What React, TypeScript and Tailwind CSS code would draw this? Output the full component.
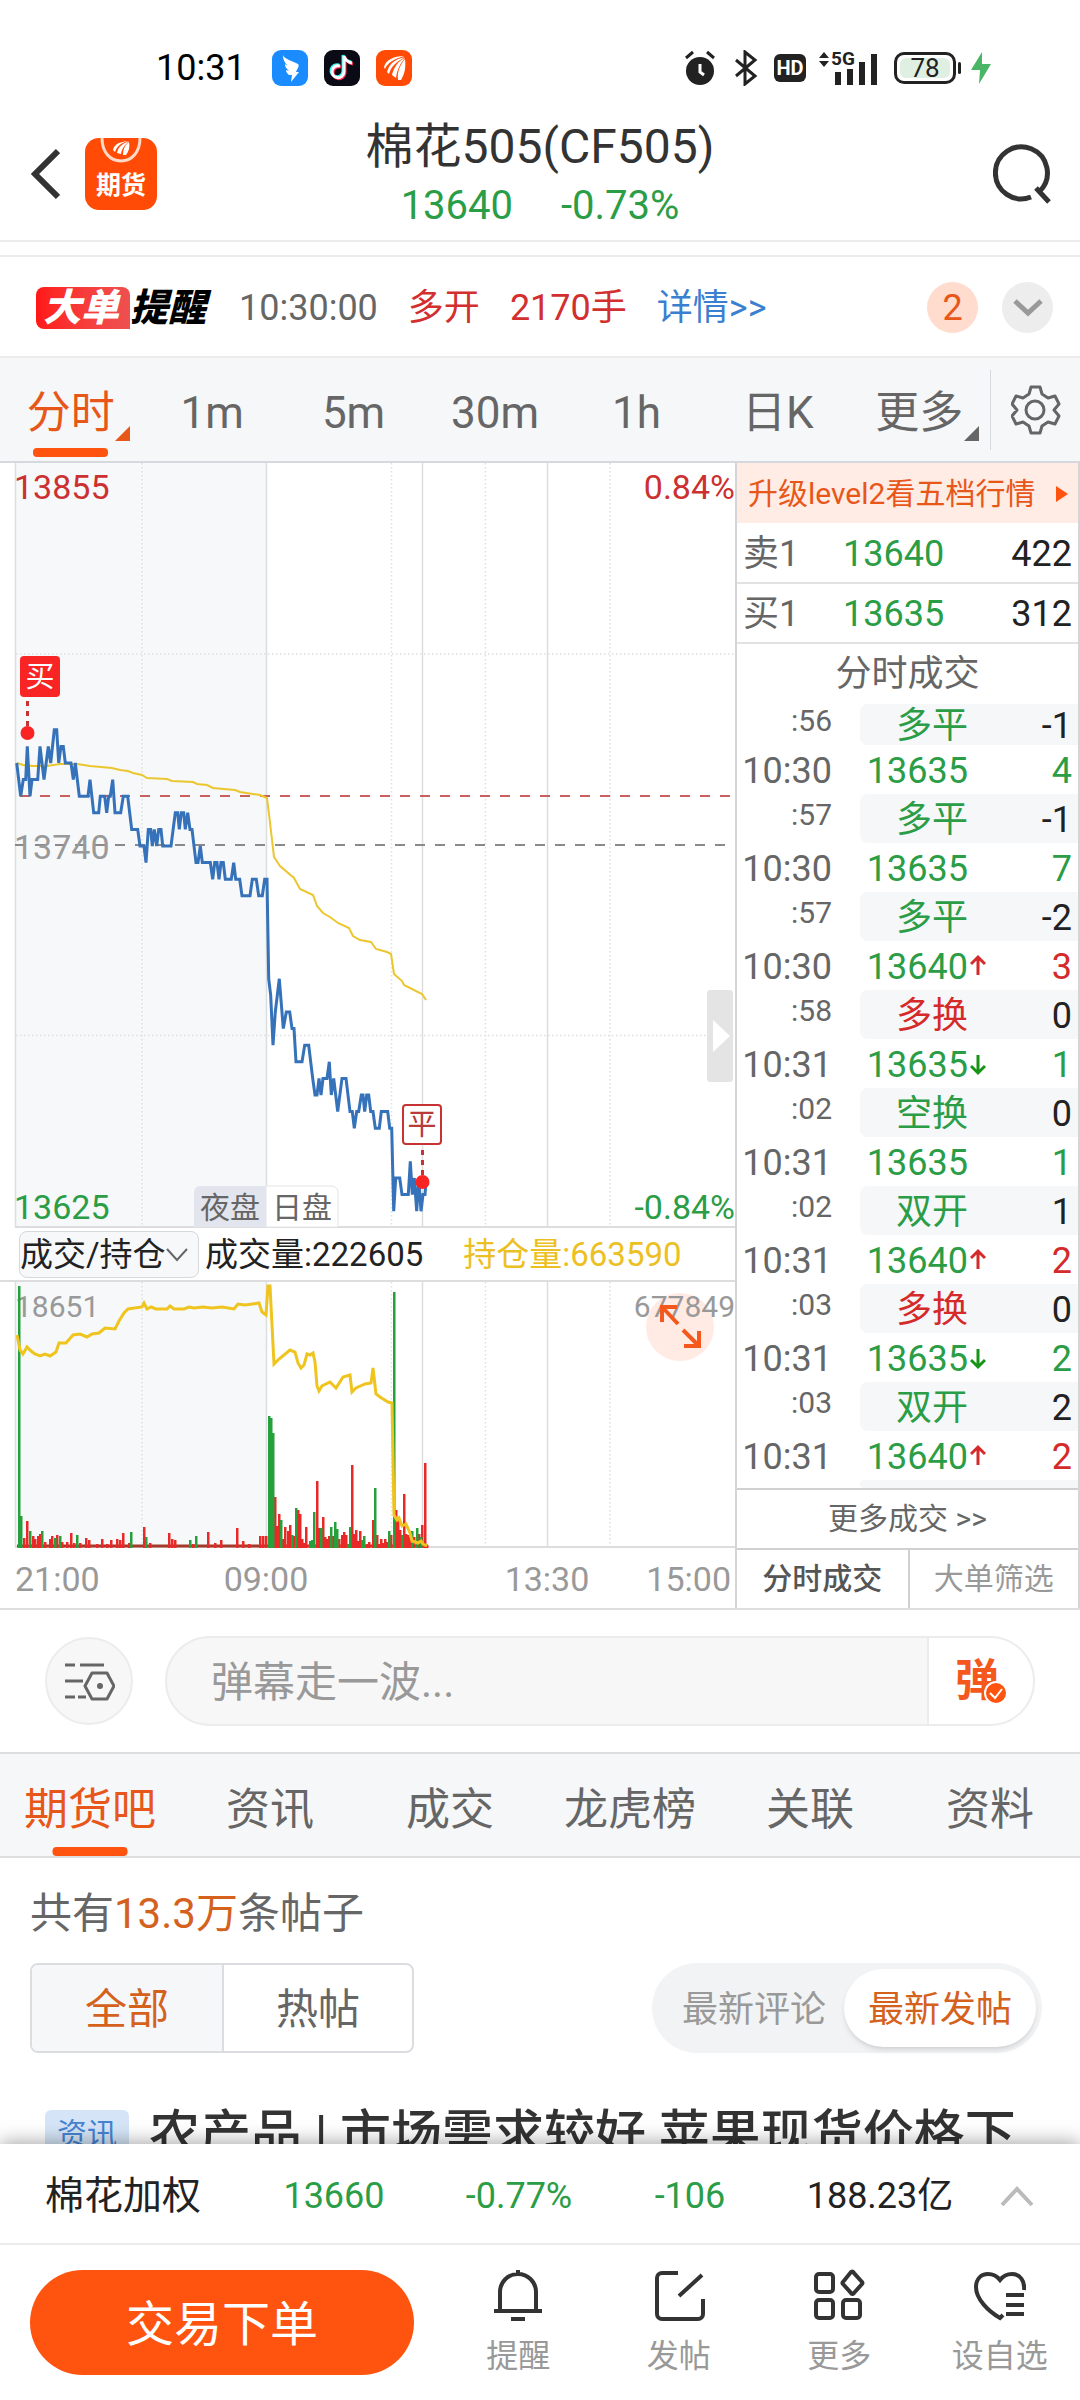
import React, { useState } from "react";
import clsx from "clsx";

type Side = "up" | "down";

interface Trade {
  time: string;
  label: string;
  qty: string;
  tone: Side;
  arrow?: Side;
  sub?: boolean;
}

const periods = ["分时", "1m", "5m", "30m", "1h", "日K", "更多"];
const sections = ["期货吧", "资讯", "成交", "龙虎榜", "关联", "资料"];

const trades: Trade[] = [
  { time: ":56", label: "多平", qty: "-1", tone: "down", sub: true },
  { time: "10:30", label: "13635", qty: "4", tone: "down" },
  { time: ":57", label: "多平", qty: "-1", tone: "down", sub: true },
  { time: "10:30", label: "13635", qty: "7", tone: "down" },
  { time: ":57", label: "多平", qty: "-2", tone: "down", sub: true },
  { time: "10:30", label: "13640", qty: "3", tone: "down", arrow: "up" },
  { time: ":58", label: "多换", qty: "0", tone: "up", sub: true },
  { time: "10:31", label: "13635", qty: "1", tone: "down", arrow: "down" },
  { time: ":02", label: "空换", qty: "0", tone: "down", sub: true },
  { time: "10:31", label: "13635", qty: "1", tone: "down" },
  { time: ":02", label: "双开", qty: "1", tone: "down", sub: true },
  { time: "10:31", label: "13640", qty: "2", tone: "down", arrow: "up" },
  { time: ":03", label: "多换", qty: "0", tone: "up", sub: true },
  { time: "10:31", label: "13635", qty: "2", tone: "down", arrow: "down" },
  { time: ":03", label: "双开", qty: "2", tone: "down", sub: true },
  { time: "10:31", label: "13640", qty: "2", tone: "down", arrow: "up" },
  { time: "", label: "", qty: "", tone: "down", sub: true },
];

// [x in thirds of a unit, price ticks below 13765]
const priceTicks: [number, number][] = [
  [50, 0], [62, 2], [70, 1], [77, 1], [82, -1], [90, 2], [96, 1], [113, 1], [120, -1], [132, 1],
  [145, -1], [152, 0], [163, -2], [170, -2], [176, 0], [183, -1], [190, -1], [196, 0], [213, 0],
  [220, 1], [226, 0], [238, 2], [264, 2], [270, 1], [281, 3], [296, 3], [301, 2], [314, 2],
  [320, 3], [326, 2], [331, 2], [338, 1], [345, 3], [362, 3], [370, 2], [383, 2], [395, 4],
  [413, 4], [420, 5], [432, 5], [438, 6], [445, 4], [452, 4], [457, 5], [463, 4], [470, 5],
  [476, 4], [483, 4], [488, 5], [513, 5], [526, 3], [533, 3], [538, 4], [544, 3], [551, 3],
  [556, 4], [563, 3], [570, 4], [576, 4], [588, 6], [594, 6], [601, 5], [607, 6], [631, 6],
  [638, 7], [644, 6], [651, 6], [657, 7], [663, 6], [670, 6], [676, 7], [694, 7], [701, 6],
  [707, 7], [719, 7], [726, 8], [750, 8], [757, 7], [769, 7], [776, 8], [787, 8], [794, 7],
  [801, 7], [806, 13], [812, 14], [819, 17], [826, 15], [838, 13], [850, 16], [859, 15],
  [869, 15], [876, 16], [882, 16], [888, 18], [906, 18], [914, 17], [926, 17], [938, 19],
  [945, 20], [951, 20], [957, 19], [963, 20], [969, 19], [981, 19], [988, 18], [994, 20],
  [1001, 19], [1013, 21], [1026, 19], [1038, 19], [1050, 21], [1057, 21], [1063, 22], [1070, 21],
  [1076, 21], [1084, 20], [1089, 20], [1094, 21], [1100, 20], [1106, 20], [1112, 21], [1119, 21],
  [1126, 22], [1138, 22], [1144, 21], [1163, 21], [1169, 22], [1175, 22], [1181, 27], [1187, 25],
  [1199, 25], [1206, 26], [1225, 26], [1231, 24], [1237, 26], [1243, 25], [1250, 27], [1256, 25],
  [1263, 27], [1269, 26], [1275, 26], [1279, 25],
];

const pricePoints = priceTicks
  .map(([x, tick]) => `${(x / 3).toFixed(1)},${(763 + tick * 16.6).toFixed(1)}`)
  .join(" ");

const averagePoints =
  "17,763 23,765 33,766 47,766 60,764 77,764 90,766 112,768 120,770 128,771 133,773 142,775 147,778 167,779 172,781 193,782 197,784 207,785 213,788 235,790 240,792 260,795 267,798 269,814 274,857 280,866 294,878 300,889 313,895 317,906 323,913 330,917 338,923 349,928 353,936 360,940 371,942 376,949 387,952 391,954 394,974 402,981 404,985 422,994 426,1000";

const interestPoints =
  "17,1335 20,1350 23,1354 27,1347 31,1351 35,1354 40,1356 45,1354 50,1356 56,1352 59,1343 66,1343 73,1335 80,1334 87,1337 92,1334 99,1333 105,1328 115,1329 119,1321 124,1313 128,1309 142,1307 144,1303 147,1309 151,1307 156,1309 167,1309 170,1306 174,1309 184,1309 189,1307 194,1308 203,1307 212,1308 222,1307 234,1309 238,1304 245,1305 259,1303 262,1312 266,1315 268,1286 270,1286 274,1364 279,1359 290,1350 295,1352 298,1363 301,1368 304,1365 307,1354 310,1355 313,1353 315,1362 317,1386 319,1391 322,1386 330,1382 336,1388 343,1377 350,1375 352,1392 356,1388 365,1384 371,1383 373,1368 376,1394 380,1397 388,1402 392,1403 394,1515 397,1520 399,1518 402,1526 406,1524 410,1533 412,1541 418,1543 421,1541 423,1544 427,1546";

// [x, height]
const upBars: [number, number][] = [
  [24, 10], [27, 27], [33, 12], [35, 9], [38, 12], [40, 14], [45, 6], [50, 9], [52, 12], [57, 13],
  [62, 6], [67, 6], [71, 15], [74, 5], [80, 5], [86, 10], [89, 8], [97, 4], [102, 9], [107, 4],
  [111, 8], [117, 9], [120, 8], [123, 15], [129, 5], [144, 21], [150, 5], [169, 15], [172, 9],
  [175, 8], [193, 4], [208, 16], [215, 5], [221, 8], [237, 20], [243, 7], [249, 4], [260, 12],
  [263, 12], [266, 12], [275, 51], [277, 22], [279, 34], [283, 9], [285, 21], [288, 17],
  [290, 23], [294, 12], [298, 38], [300, 34], [302, 9], [304, 5], [306, 21], [317, 67],
  [319, 20], [323, 31], [325, 11], [327, 9], [329, 12], [333, 12], [339, 9], [342, 13],
  [344, 16], [346, 13], [352, 83], [354, 14], [356, 18], [358, 7], [360, 17], [367, 4],
  [369, 6], [373, 28], [377, 13], [379, 4], [381, 9], [383, 5], [385, 9], [387, 6], [391, 13],
  [396, 38], [398, 28], [400, 18], [404, 54], [406, 14], [408, 13], [410, 11], [414, 11],
  [419, 14], [422, 23], [425, 85], [427, 3],
];
const downBars: [number, number][] = [
  [19, 262], [21, 32], [30, 17], [42, 17], [55, 10], [60, 12], [77, 13], [131, 16], [146, 11],
  [190, 8], [196, 12], [269, 132], [271, 130], [273, 115], [281, 28], [292, 13], [296, 40],
  [310, 7], [312, 8], [314, 36], [321, 20], [331, 21], [335, 26], [337, 19], [348, 4],
  [350, 21], [362, 8], [364, 12], [375, 60], [389, 17], [394, 256], [402, 13], [412, 17],
  [417, 20], [421, 11],
];

const StatusBar: React.FC = () => (
  <div className="flex h-24 shrink-0 items-center justify-between pt-10 pr-[87px] pl-[156px]">
    <div className="flex items-center gap-4">
      <span className="mr-[10px] text-[36px] leading-[44px] text-black">10:31</span>
      <svg className="size-9" viewBox="0 0 36 36">
        <rect width="36" height="36" rx="9" fill="#1a8cff" />
        <path d="M11 5c1 4 10 6 15 9 2 2-1 5-2 8h3l-8 10 1-7h-3c-2-2-3-3-3-5l3 1c-3-3-4-4-4-7l3 2c-4-4-5-7-5-11Z" fill="#fff" />
      </svg>
      <svg className="size-9" viewBox="0 0 36 36">
        <rect width="36" height="36" rx="9" fill="#0b0b16" />
        <g fill="none" strokeWidth="3">
          <path d="M16 16a6 6 0 1 0 4 6V6c1 4 4 6 8 7" stroke="#25f4ee" transform="translate(-1 -1)" />
          <path d="M16 16a6 6 0 1 0 4 6V6c1 4 4 6 8 7" stroke="#fe2c55" transform="translate(1 1)" />
          <path d="M16 16a6 6 0 1 0 4 6V6c1 4 4 6 8 7" stroke="#fff" />
        </g>
      </svg>
      <svg className="size-9" viewBox="0 0 36 36">
        <rect width="36" height="36" rx="9" fill="#ff4b05" />
        <path d="M8 17C10 10 17 6 28 6 19 9 12 12 9 19ZM11 22C13 14 19 9 29 7 20 12 15 17 13 24ZM16 25c2-8 6-14 13-17-5 6-8 12-9 20ZM22 30c-1-8 2-15 7-21 1 8 0 14-4 21Z" fill="#fff" />
      </svg>
    </div>
    <div className="flex items-center text-[#222]">
      <svg className="h-9 w-8" viewBox="0 0 32 36">
        <circle cx="16" cy="21" r="14" fill="#222" />
        <path d="M2 8l7-6M30 8l-7-6" stroke="#222" strokeWidth="3" />
        <path d="M16 14v8l4 3" stroke="#fff" strokeWidth="3" fill="none" />
      </svg>
      <svg className="ml-[18px] h-9 w-6" viewBox="0 0 24 36">
        <path d="M2 10l19 16-10 8V2l10 8L2 26" fill="none" stroke="#222" strokeWidth="3" />
      </svg>
      <span className="ml-4 flex h-7 w-8 items-center justify-center rounded-md bg-[#222] text-[20px] leading-none font-bold text-white">
        HD
      </span>
      <div className="relative ml-3 h-9 w-[60px]">
        <span className="absolute top-0 left-[13px] text-[19px] leading-[18px] font-bold">5G</span>
        <svg className="h-9 w-[60px]" viewBox="0 0 60 36">
          <path d="M6 2l5 6H1ZM6 17l5-6H1Z" fill="#222" />
          <path d="M20 22v13M32 19v16M44 12v23M56 4v31" stroke="#222" strokeWidth="6" />
        </svg>
      </div>
      <div className="ml-4 flex items-center gap-[2px]">
        <span className="flex h-8 w-[62px] rounded-[10px] border-[3px] border-[#222] p-[3px]">
          <span className="flex flex-1 items-center justify-center rounded-md bg-[#dff0e3] text-[26px] leading-none">
            78
          </span>
        </span>
        <span className="h-3 w-[3px] rounded bg-[#222]" />
      </div>
      <svg className="ml-2 h-8 w-6" viewBox="0 0 24 32">
        <path d="M13 0L2 18h9l-1 14L22 12h-9Z" fill="#49b566" />
      </svg>
    </div>
  </div>
);

const Header: React.FC = () => (
  <header className="flex h-[146px] shrink-0 items-center border-b-2 border-[#ececec] pt-3">
    <div className="flex w-40 items-center gap-[25px] pl-[31px]">
      <button aria-label="返回">
        <svg className="h-[52px] w-[29px]" viewBox="0 0 29 52">
          <path d="M27 3L4 26l23 23" fill="none" stroke="#333" strokeWidth="6" />
        </svg>
      </button>
      <div className="relative flex size-[72px] shrink-0 items-end justify-center overflow-hidden rounded-[14px] bg-[#ff4b05] pb-2">
        <svg className="absolute top-0 left-0 size-[72px]" viewBox="0 0 72 72">
          <path d="M17 0c0 14 8 23 19 23S55 14 55 0" fill="none" stroke="#ffd9c8" strokeWidth="3" />
          <path d="M28 12c1-5 5-8 15-9-7 2-11 5-13 11ZM32 15c1-6 5-9 12-12-4 4-7 7-8 13ZM38 17c0-6 2-10 6-13 1 5 0 9-3 13Z" fill="#fff" />
        </svg>
        <span className="text-[25px] leading-[32px] font-bold text-white">期货</span>
      </div>
    </div>
    <div className="flex flex-1 flex-col items-center">
      <h1 className="text-[48px] leading-[60px] text-[#333]">棉花505(CF505)</h1>
      <div className="mt-1 flex gap-12 text-[40px] leading-[50px] text-[#2a9d46]">
        <span>13640</span>
        <span>-0.73%</span>
      </div>
    </div>
    <div className="flex w-40 justify-end pr-[27px]">
      <button aria-label="搜索">
        <svg className="size-[60px]" viewBox="0 0 60 60">
          <path d="M38 53a26 26 0 1 1 9-6M43 44l13 14" fill="none" stroke="#333" strokeWidth="5" />
        </svg>
      </button>
    </div>
  </header>
);

const AlertRow: React.FC = () => (
  <div className="flex h-[101px] shrink-0 items-center border-b-2 border-[#ececec] pt-[2px] pr-[27px] pl-9 text-[36px] leading-[50px]">
    <span className="flex h-[42px] w-[94px] items-center justify-center rounded-lg rounded-br-none bg-linear-to-r from-[#ff1616] to-[#ee5050] pr-1 text-[38px] leading-none font-black text-white italic">
      大单
    </span>
    <span className="mr-[33px] text-[38px] leading-none font-black text-black italic">提醒</span>
    <span className="mr-[30px] text-[#666]">10:30:00</span>
    <span className="mr-[30px] text-[#d32f2f]">多开</span>
    <span className="mr-[30px] text-[#d32f2f]">2170手</span>
    <a href="#detail" className="text-[#3b7fd0]">
      详情&gt;&gt;
    </a>
    <span className="ml-auto flex size-[51px] items-center justify-center rounded-full bg-[#ffdccd] text-[#e8571a]">
      2
    </span>
    <button aria-label="展开" className="ml-6 flex size-[51px] items-center justify-center rounded-full bg-[#ededed]">
      <svg className="h-5 w-8" viewBox="0 0 32 20">
        <path d="M3 3l13 12L29 3" fill="none" stroke="#999" strokeWidth="5" />
      </svg>
    </button>
  </div>
);

const PeriodTabs: React.FC = () => {
  const [active, setActive] = useState("分时");
  return (
    <nav className="flex h-[105px] shrink-0 items-center border-b-2 border-[#d5d8dc] bg-[#f6f7f9]">
      <div className="grid h-full flex-1 grid-cols-7">
        {periods.map((p) => (
          <button
            key={p}
            onClick={() => setActive(p)}
            className={clsx(
              "relative pt-[6px] text-[44px] leading-[60px]",
              p === active ? "text-[#e8571a]" : "text-[#666]",
            )}
          >
            {p}
            {(p === "分时" || p === "更多") && (
              <svg className="absolute right-[11px] bottom-[20px] size-[15px]" viewBox="0 0 15 15">
                <path d="M15 0v15H0Z" fill="currentColor" />
              </svg>
            )}
            {p === active && (
              <span className="absolute inset-x-[33px] bottom-1 h-[9px] rounded bg-[#ff5310]" />
            )}
          </button>
        ))}
      </div>
      <span className="h-20 w-px bg-[#d5d8dc]" />
      <button aria-label="设置" className="flex w-[89px] justify-center">
        <svg className="size-[50px]" viewBox="0 0 50 50" fill="none" stroke="#666" strokeWidth="3">
          <path d="M20 2h9l2 7 6 4 7-2 4 8-5 6 5 6-4 8-7-2-6 4-2 7h-9l-2-7-6-4-7 2-4-8 5-6-5-6 4-8 7 2 6-4Z" strokeLinejoin="round" />
          <circle cx="24" cy="25" r="9" />
        </svg>
      </button>
    </nav>
  );
};

const PriceChart: React.FC = () => (
  <svg className="block h-auto w-full text-[34px]" viewBox="0 463 735 765">
    <rect x="16" y="463" width="250" height="765" fill="#f6f8fa" />
    <path d="M15.5 463v765M266.5 463v765M422.5 463v765M547.5 463v765" stroke="#dcdddf" strokeWidth="1.5" />
    <path
      d="M142 463v765M391.5 463v765M485.5 463v765M610 463v765M16 654h719M16 1035.5h719"
      stroke="#dedfe1"
      strokeWidth="1.5"
      strokeDasharray="1.5 2.5"
    />
    <path d="M15 1227h720" stroke="#dddddf" strokeWidth="2" />
    <path d="M20 796h715" stroke="#c8605e" strokeWidth="2" strokeDasharray="10 10" />
    <path d="M15 845h715" stroke="#8a8a8a" strokeWidth="2" strokeDasharray="10 10" />
    <g>
      <path d="M194 1227v-35a6 6 0 0 1 6-6h66v41Z" fill="#e2e5ed" />
      <path d="M266 1186h66a6 6 0 0 1 6 6v35h-72Z" fill="#fff" stroke="#e4e4e6" />
      <text x="200" y="1218" fontSize="30" fill="#666">夜盘</text>
      <text x="272" y="1218" fontSize="30" fill="#666">日盘</text>
    </g>
    <polyline points={averagePoints} fill="none" stroke="#ecc62f" strokeWidth="2" />
    <polyline points={pricePoints} fill="none" stroke="#3572b9" strokeWidth="3" />
    <text x="14" y="499" fill="#cc3030">13855</text>
    <text x="735" y="499" fill="#cc3030" textAnchor="end">0.84%</text>
    <text x="14" y="859" fill="#999">13740</text>
    <text x="14" y="1219" fill="#2a9d46">13625</text>
    <text x="735" y="1219" fill="#2a9d46" textAnchor="end">-0.84%</text>
    <g>
      <rect x="20" y="656" width="40" height="41" rx="4" fill="#f92525" />
      <text x="40" y="687" fontSize="29" fill="#fff" textAnchor="middle">买</text>
      <path d="M27.5 701v26" stroke="#c73333" strokeWidth="3" strokeDasharray="5 5" />
      <circle cx="27.5" cy="733" r="7" fill="#f92525" />
    </g>
    <g>
      <rect x="403" y="1105" width="38" height="39" rx="3" fill="#fff" stroke="#c73333" strokeWidth="2" />
      <text x="422" y="1135" fontSize="29" fill="#b83a3a" textAnchor="middle">平</text>
      <path d="M422.5 1150v26" stroke="#c73333" strokeWidth="3" strokeDasharray="5 5" />
      <circle cx="422.5" cy="1182" r="7" fill="#f92525" />
    </g>
    <rect x="707" y="990" width="26" height="92" rx="3" fill="#e4e4e4" />
    <path d="M713 1020l17 16-17 16Z" fill="#fff" />
  </svg>
);

const VolumeChart: React.FC = () => (
  <svg className="block h-auto w-full text-[34px]" viewBox="0 1282 735 326">
    <rect x="16" y="1282" width="250" height="265" fill="#f6f8fa" />
    <path d="M15.5 1282v265M266.5 1282v265M422.5 1282v265M547.5 1282v265" stroke="#dcdddf" strokeWidth="1.5" />
    <path
      d="M142 1282v265M391.5 1282v265M485.5 1282v265M610 1282v265"
      stroke="#dedfe1"
      strokeWidth="1.5"
      strokeDasharray="1.5 2.5"
    />
    <path d="M15 1547h720" stroke="#dddddf" strokeWidth="2" />
    <path d="M17 1546h249" stroke="#a33a2a" strokeWidth="3" />
    <path d="M266 1546h162" stroke="#e02a24" strokeWidth="3" />
    <circle cx="680" cy="1327" r="34" fill="#ffebe3" />
    <text x="15" y="1317" fontSize="30" fill="#999">18651</text>
    <text x="735" y="1317" fontSize="30" fill="#999" textAnchor="end">677849</text>
    <path
      d="M678 1324l-15-16M662 1322v-15h15M683 1330l15 15M699 1331v15h-15"
      fill="none"
      stroke="#f4581c"
      strokeWidth="4"
    />
    {upBars.map(([x, h]) => (
      <rect key={x} x={x - 1} y={1548 - h} width="2.5" height={h} fill="#e92828" />
    ))}
    {downBars.map(([x, h]) => (
      <rect key={x} x={x - 1} y={1548 - h} width="2.5" height={h} fill="#26a03c" />
    ))}
    <polyline points={interestPoints} fill="none" stroke="#efc41f" strokeWidth="3" />
    <g fill="#999">
      <text x="15" y="1591">21:00</text>
      <text x="266" y="1591" textAnchor="middle">09:00</text>
      <text x="547" y="1591" textAnchor="middle">13:30</text>
      <text x="731" y="1591" textAnchor="end">15:00</text>
    </g>
  </svg>
);

const ArrowIcon: React.FC<{ dir: Side }> = ({ dir }) => (
  <svg
    className={clsx("mx-[2px] h-6 w-4", dir === "down" && "rotate-180")}
    viewBox="0 0 16 24"
    fill="none"
    stroke={dir === "up" ? "#d42a2a" : "#169416"}
    strokeWidth="3"
  >
    <path d="M1 10l7-7 7 7M8 3v18" />
  </svg>
);

const QuotePanel: React.FC = () => (
  <div className="flex w-[345px] shrink-0 flex-col border-x-2 border-[#d5d5d8]">
    <button className="flex h-[60px] items-center justify-between bg-[#ffece4] pt-[2px] pr-[10px] pl-[11px] text-[30px] leading-none text-[#e8571a]">
      升级level2看五档行情
      <svg className="h-4 w-3" viewBox="0 0 12 16">
        <path d="M0 0l12 8-12 8Z" fill="#ff5310" />
      </svg>
    </button>
    <dl className="text-[36px] leading-none">
      <div className="flex h-[61px] items-center border-b-2 border-[#e2e2e4] pt-[2px] pr-[6px] pl-[6px]">
        <dt className="w-[100px] text-[#666]">卖1</dt>
        <dd className="text-[#2a9d46]">13640</dd>
        <dd className="ml-auto text-[#222]">422</dd>
      </div>
      <div className="flex h-[60px] items-center border-b-2 border-[#e2e2e4] pt-[2px] pr-[6px] pl-[6px]">
        <dt className="w-[100px] text-[#666]">买1</dt>
        <dd className="text-[#2a9d46]">13635</dd>
        <dd className="ml-auto text-[#222]">312</dd>
      </div>
    </dl>
    <h2 className="flex h-[60px] items-center justify-center text-[36px] leading-none text-[#666]">分时成交</h2>
    <div className="h-[784px]">
      <table className="w-full table-fixed border-separate border-spacing-0 text-[36px] leading-none">
        <colgroup>
          <col className="w-[123px]" />
          <col className="w-[108px]" />
          <col />
          <col />
        </colgroup>
        <tbody>
          {trades.map((t, i) => (
            <tr key={i} className="h-[49px] first:h-[41px] last:h-2">
              <td
                className={clsx(
                  "pr-[28px] text-right text-[#666]",
                  t.sub ? "text-[30px]" : "pt-[2px]",
                  t.sub && t.time && "pb-2",
                )}
              >
                {t.time}
              </td>
              <td
                className={clsx(
                  "pt-[2px] text-right",
                  t.sub && "rounded-l-lg bg-[#f6f7f9]",
                  t.tone === "up" ? "text-[#d42a2a]" : "text-[#2a9d46]",
                )}
              >
                {t.label}
              </td>
              <td className={clsx(t.sub && "bg-[#f6f7f9]")}>{t.arrow && <ArrowIcon dir={t.arrow} />}</td>
              <td
                className={clsx(
                  "pt-[2px] pr-[6px] text-right",
                  t.sub && "bg-[#f6f7f9] text-[#222]",
                  !t.sub && (t.arrow === "up" ? "text-[#d42a2a]" : "text-[#2a9d46]"),
                )}
              >
                {t.qty}
              </td>
            </tr>
          ))}
        </tbody>
      </table>
    </div>
    <button className="h-[60px] border-t-2 border-[#d0d0d2] text-[30px] leading-none text-[#666]">更多成交 &gt;&gt;</button>
    <div className="grid h-[60px] grid-cols-2 border-t-2 border-[#d0d0d2] text-[30px] leading-none">
      <button className="font-medium text-[#555]">分时成交</button>
      <button className="border-l-2 border-[#d0d0d2] text-[#999]">大单筛选</button>
    </div>
  </div>
);

const MarketSection: React.FC = () => (
  <section className="flex shrink-0 border-b-2 border-[#dedede]">
    <div className="min-w-0 flex-1">
      <PriceChart />
      <div className="flex h-[54px] items-center border-b-2 border-[#dddddf] pl-[19px] text-[33px] leading-none">
        <div className="relative">
          <select
            aria-label="指标"
            className="block h-[47px] w-[180px] appearance-none rounded-lg border border-[#d5d8dc] bg-[#f6f8fa] text-[#222]"
          >
            <option>成交/持仓</option>
          </select>
          <svg className="pointer-events-none absolute top-4 right-[10px] h-4 w-6" viewBox="0 0 24 16">
            <path d="M2 2l10 11L22 2" fill="none" stroke="#666" strokeWidth="2" />
          </svg>
        </div>
        <span className="ml-[6px] text-[#222]">成交量:222605</span>
        <span className="ml-10 text-[#ecc022]">持仓量:663590</span>
      </div>
      <VolumeChart />
    </div>
    <QuotePanel />
  </section>
);

const DanmuBar: React.FC = () => (
  <div className="flex h-36 shrink-0 items-center gap-8 border-b-2 border-[#dedede] px-[45px]">
    <button
      aria-label="弹幕设置"
      className="flex size-[88px] shrink-0 items-center justify-center rounded-full border-2 border-[#ececec] bg-[#f7f7f7]"
    >
      <svg className="h-10 w-[52px]" viewBox="0 0 52 40" fill="none" stroke="#666" strokeWidth="3">
        <path d="M2 4h10M17 4h24M2 20h18M2 36h10M15 36h8" />
        <path d="M29 12h15l7 13-7 13H29l-7-13Z" strokeLinejoin="round" />
        <circle cx="37" cy="25" r="3" fill="#666" stroke="none" />
      </svg>
    </button>
    <div className="flex h-[90px] flex-1 overflow-hidden rounded-full border-2 border-[#ececec] bg-[#f7f7f7]">
      <input
        aria-label="弹幕"
        placeholder="弹幕走一波..."
        className="min-w-0 flex-1 pt-1 pl-11 text-[42px] leading-[60px] outline-none placeholder:text-[#999]"
      />
      <button className="relative w-[106px] border-l-2 border-[#ececec] bg-white pr-2 text-[44px] leading-[60px] font-bold text-[#f4581c]">
        弹
        <svg className="absolute right-[25px] bottom-[19px] size-6" viewBox="0 0 24 24">
          <circle cx="12" cy="12" r="11" fill="#ff5310" stroke="#fff" strokeWidth="2" />
          <path d="M6 12l5 5 7-9" fill="none" stroke="#fff" strokeWidth="2" />
        </svg>
      </button>
    </div>
  </div>
);

const SectionTabs: React.FC = () => {
  const [active, setActive] = useState("期货吧");
  return (
    <nav className="grid h-[104px] shrink-0 grid-cols-6 border-b-2 border-[#dedede] bg-[#f6f7f9]">
      {sections.map((s) => (
        <button
          key={s}
          onClick={() => setActive(s)}
          className={clsx(
            "relative pt-[10px] text-[44px] leading-[60px]",
            s === active ? "text-[#e8571a]" : "text-[#666]",
          )}
        >
          {s}
          {s === active && (
            <span className="absolute bottom-0 left-1/2 h-[9px] w-[75px] -translate-x-1/2 rounded bg-[#ff5310]" />
          )}
        </button>
      ))}
    </nav>
  );
};

const Posts: React.FC = () => (
  <section className="min-h-0 flex-1 overflow-hidden pt-[30px] pr-[38px] pl-[30px]">
    <p className="text-[42px] leading-[52px] text-[#666]">
      共有<span className="text-[#d4611c]">13.3万</span>条帖子
    </p>
    <div className="mt-[23px] flex items-center justify-between">
      <div className="grid h-[90px] w-[384px] grid-cols-2 overflow-hidden rounded-lg border-2 border-[#dcdde0] text-[42px] leading-[60px]">
        <button className="bg-[#f6f7f9] pt-1 text-[#d4611c]">全部</button>
        <button className="border-l-2 border-[#dcdde0] pt-1 text-[#666]">热帖</button>
      </div>
      <div className="flex h-[90px] items-center rounded-full bg-[#f2f3f5] pr-[6px] pl-[30px] text-[36px] leading-[50px]">
        <button className="mr-[18px] pt-1 text-[#999]">最新评论</button>
        <button className="h-[78px] w-48 rounded-full bg-white pt-1 text-[#d4611c] shadow-md">最新发帖</button>
      </div>
    </div>
    <article className="mt-[50px] flex items-center pl-[15px] whitespace-nowrap">
      <span className="mr-5 flex h-12 w-[84px] items-center justify-center rounded-md bg-[#d5e5f7] text-[30px] leading-none text-[#4684d2]">
        资讯
      </span>
      <h3 className="pt-[2px] text-[51px] leading-[60px] font-medium text-[#333]">
        农产品 | 市场需求较好 苹果现货价格下
      </h3>
    </article>
  </section>
);

const actionIcons = [
  {
    label: "提醒",
    icon: <path d="M26 1v6M8 42V23a18 18 0 0 1 36 0v19M2 42h48M19 50h14" />,
  },
  {
    label: "发帖",
    icon: <path d="M25 4H9a5 5 0 0 0-5 5v36a5 5 0 0 0 5 5h36a5 5 0 0 0 5-5V30M49 6L26 27" />,
  },
  {
    label: "更多",
    icon: (
      <>
        <rect x="3" y="5" width="17" height="18" rx="3" />
        <rect x="3" y="31" width="17" height="18" rx="3" />
        <rect x="30" y="31" width="17" height="18" rx="3" />
        <path d="M38 3q2-1 3 1l8 9q1 1 0 2l-8 9q-2 2-3 0l-8-9q-1-1 0-2Z" />
      </>
    ),
  },
  {
    label: "设自选",
    icon: (
      <path d="M50 21C51 12 46 5 38 5c-5 0-9 2-12 6-3-4-7-6-12-6C7 5 2 10 2 18c0 12 12 24 24 31l3-3M32 26h18M32 36h18M32 45h18" />
    ),
  },
];

const BottomBar: React.FC = () => (
  <footer className="relative shrink-0 bg-white shadow-[0_-2px_18px_rgba(0,0,0,0.35)]">
    <div className="grid h-[101px] grid-cols-[240fr_188fr_182fr_160fr_220fr_90fr] items-center border-b-2 border-[#ececec] pt-1 text-center text-[36px] leading-[50px] text-[#2a9d46]">
      <span className="pl-[45px] text-left text-[39px] text-[#222]">棉花加权</span>
      <span>13660</span>
      <span>-0.77%</span>
      <span>-106</span>
      <span className="text-[#222]">188.23亿</span>
      <button aria-label="收起" className="pl-[10px]">
        <svg className="h-6 w-[34px]" viewBox="0 0 34 24">
          <path d="M2 21L17 5l15 16" fill="none" stroke="#bbb" strokeWidth="4" />
        </svg>
      </button>
    </div>
    <div className="flex h-[155px] items-center pl-[30px]">
      <button className="h-[105px] w-[384px] rounded-full bg-[#ff5310] pt-1 text-[48px] leading-[60px] text-white">
        交易下单
      </button>
      <div className="ml-6 grid flex-1 grid-cols-4">
        {actionIcons.map((a) => (
          <button key={a.label} className="flex flex-col items-center gap-[14px] text-[32px] leading-[40px] text-[#999]">
            <svg className="h-[53px] w-[52px]" viewBox="0 0 52 53" fill="none" stroke="#333" strokeWidth="4">
              {a.icon}
            </svg>
            {a.label}
          </button>
        ))}
      </div>
    </div>
  </footer>
);

const App: React.FC = () => (
  <div className="flex h-screen flex-col overflow-hidden bg-white font-[Roboto,'Noto_Sans_CJK_SC',sans-serif]">
    <StatusBar />
    <Header />
    <div className="h-[15px] shrink-0 border-b-2 border-[#ececec]" />
    <AlertRow />
    <PeriodTabs />
    <MarketSection />
    <DanmuBar />
    <SectionTabs />
    <Posts />
    <BottomBar />
  </div>
);

export default App;
